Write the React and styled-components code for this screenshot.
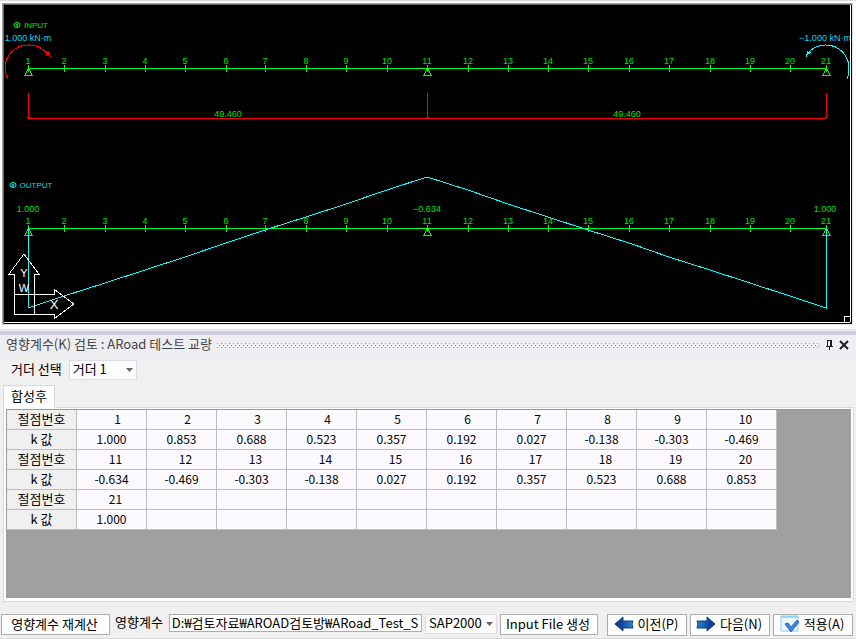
import React from "react";
import styled, { createGlobalStyle } from "styled-components";

const GlobalStyle = createGlobalStyle`
  *, *::before, *::after { box-sizing: border-box; }
  body {
    margin: 0;
    background: #f0f0f0;
    color: #000;
    font: 13px/18px "Noto Sans CJK KR", sans-serif;
  }
  button, input, select { font: inherit; color: inherit; }
`;

const Page = styled.div`
  display: flex;
  flex-direction: column;
  min-height: 100vh;
  border-bottom: 1px solid #d9d9d9;
`;

const ViewerArea = styled.div`
  background: #fff;
  border-top: 1px solid #d9d9d9;
  border-bottom: 1px solid #d9d9d9;
  padding: 2px 3px 4px 2px;
`;

const ViewerFrame = styled.div`
  border: 1px solid;
  border-color: #a0a0a0 #e3e3e3 #e3e3e3 #a0a0a0;
`;

const Drawing = styled.svg`
  display: block;
  width: 100%;
  height: auto;
  background: #000;
  border-top: 1px solid #696969;
  border-left: 1px solid #696969;
  fill: none;
  shape-rendering: crispEdges;
`;

const Label = styled.text`
  fill: ${(p) => p.$color};
  font: ${(p) => p.$size || "9px"} "Liberation Sans", sans-serif;
  text-anchor: middle;
`;

const Dock = styled.section`
  display: flex;
  flex-direction: column;
  flex: 1;
  margin-top: 1px;
  border-top: 4px solid #ccccdc;
`;

const TitleBar = styled.header`
  display: flex;
  align-items: center;
  gap: 5px;
  height: 20px;
  padding: 0 7px 0 6px;
  background: #eeeef2;
`;

const Title = styled.h1`
  margin: 0;
  padding-bottom: 2px;
  font-size: 13px;
  line-height: 18px;
  font-weight: 400;
  color: #444;
  white-space: nowrap;
`;

const Grip = styled.div`
  flex: 1;
  height: 5px;
  background: conic-gradient(from 270deg at 1px 1px, #999 25%, transparent 0) 0 0 / 4px 4px,
    conic-gradient(from 270deg at 1px 1px, #999 25%, transparent 0) 2px 2px / 4px 4px;
`;

const IconButton = styled.button`
  display: flex;
  padding: 0;
  border: 0;
  background: none;
  svg { display: block; }
`;

const SelectorRow = styled.div`
  display: flex;
  align-items: center;
  gap: 7px;
  height: 30px;
  padding-left: 11px;
  label { padding-bottom: 2px; }
`;

const SelectBox = styled.span`
  display: grid;
  align-items: center;
  width: ${(p) => p.$width};
  height: 20px;
  background: #fcfcfd;
  border: 1px solid #dcdce6;
  select, svg { grid-area: 1 / 1; }
  svg { justify-self: end; margin-right: 3px; pointer-events: none; }
  select {
    width: 100%;
    height: 18px;
    padding: 0 0 2px 3px;
    border: 0;
    background: none;
    appearance: none;
    outline: 0;
    line-height: 16px;
  }
`;

const TabList = styled.div`
  display: flex;
  padding-left: 3px;
`;

const Tab = styled.button`
  position: relative;
  width: 52px;
  height: 23px;
  margin-bottom: -1px;
  padding: 0 0 2px;
  border: 1px solid #d9d9d9;
  border-bottom: 0;
  background: #fff;
  line-height: 20px;
`;

const TabPanel = styled.div`
  display: flex;
  flex: 1;
  margin: 0 2px 0 3px;
  padding: 1px 2px 3px;
  background: #fff;
  border: 1px solid #d9d9d9;
`;

const GridArea = styled.div`
  flex: 1;
  background: #a0a0a0;
  border-top: 1px solid #989898;
  border-left: 1px solid #989898;
  overflow: auto;
`;

const Table = styled.table`
  width: 770px;
  table-layout: fixed;
  border-spacing: 0;
  background: #fcfaff;
  th, td {
    height: 20px;
    padding: 0 0 2px;
    border-right: 1px solid #bdbdbd;
    border-bottom: 1px solid #bdbdbd;
    text-align: center;
    font-weight: 400;
    line-height: 17px;
  }
  th { background: #f0f0f0; }
  td { font-size: 12px; }
`;

const NodeCell = styled.td`
  && { padding-left: ${(p) => (p.$single ? "12px" : "8px")}; }
`;

const Footer = styled.footer`
  display: flex;
  align-items: flex-start;
  gap: 3px;
  height: 36px;
  padding: 12px 3px 0 1px;
`;

const Button = styled.button`
  display: flex;
  align-items: center;
  justify-content: center;
  gap: 4px;
  flex: none;
  width: ${(p) => p.$width};
  height: ${(p) => (p.$tall ? "22px" : "21px")};
  padding: 0 2px 2px 0;
  background: #fdfdfd;
  border: 1px solid #adadad;
  line-height: 18px;
  white-space: nowrap;
`;

const PathLabel = styled.label`
  margin: 0 3px 0 2px;
  line-height: 16px;
  white-space: nowrap;
`;

const PathInput = styled.input`
  flex: 1;
  min-width: 0;
  height: 18px;
  padding: 0 2px 2px;
  border: 1px solid #adadad;
  background: #fff;
  outline: 0;
  line-height: 14px;
`;

const Navigation = styled.nav`
  display: flex;
  gap: 3px;
  margin-left: 6px;
`;

const GREEN = "#00ff00";
const CYAN = "#00ffff";
const RED = "#ff0000";
const GREEN_TEXT = "#00e000";
const CYAN_TEXT = "#00dcec";

const nodeX = [28, 64, 105, 145, 185, 226, 265, 306, 346, 387, 427, 468, 508, 548, 588, 629, 669, 710, 750, 790, 826];
const kValues = [
  "1.000", "0.853", "0.688", "0.523", "0.357", "0.192", "0.027", "-0.138", "-0.303", "-0.469", "-0.634",
  "-0.469", "-0.303", "-0.138", "0.027", "0.192", "0.357", "0.523", "0.688", "0.853", "1.000",
];
const supports = [28, 427, 826];

function Beam({ y }) {
  return (
    <g stroke={GREEN}>
      <path d={`M28 ${y}H826`} />
      {nodeX.map((x, i) => (
        <g key={x}>
          <path d={`M${x} ${y - 3}V${y + 4}`} />
          <Label $color={GREEN_TEXT} stroke="none" x={x} y={y - 4}>{i + 1}</Label>
        </g>
      ))}
      {supports.map((x) => (
        <path key={x} d={`M${x} ${y + 1}L${x - 3} ${y + 7}H${x + 4}L${x + 1} ${y + 1}`} />
      ))}
    </g>
  );
}

function Marker({ x, y, color }) {
  return (
    <g stroke={color} shapeRendering="auto">
      <ellipse cx={x} cy={y} rx="3" ry="2.5" />
      <path d={`M${x - 1} ${y}h2M${x} ${y - 1}v3`} />
    </g>
  );
}

function BeamDrawing() {
  const points = nodeX.map((x, i) => `${x},${228 + Math.round(Number(kValues[i]) * 80)}`);
  return (
    <Drawing viewBox="4 5 848 319" role="img" aria-label="영향계수 INPUT / OUTPUT">
      <Marker x={17} y={25} color={GREEN} />
      <Label $color={GREEN_TEXT} $size="8px" x="36" y="28">INPUT</Label>
      <Label $color={CYAN_TEXT} x="28" y="41">1.000 kN·m</Label>
      <Label $color={CYAN_TEXT} x="825" y="41">−1.000 kN·m</Label>
      <path
        stroke={RED}
        d="M8 79A23 23 0 0 1 5 68A23 23 0 0 1 28 45A23 23 0 0 1 48 55M46 52L51 57M46 56L48 51L50 56"
      />
      <path
        stroke={CYAN}
        d="M847 79A23 23 0 0 0 849 68A23 23 0 0 0 826 45A23 23 0 0 0 808 53M806 57L808 51M807 55L811 52"
      />
      <Beam y={68} />
      <g stroke={RED}>
        <path d="M28 118H826" />
        {supports.map((x) => <path key={x} d={`M${x} 93V118M${x - 1} 117h3`} />)}
      </g>
      <Label $color={GREEN_TEXT} x="228" y="117">49.460</Label>
      <Label $color={GREEN_TEXT} x="627" y="117">49.460</Label>

      <Marker x={13} y={185} color={CYAN} />
      <Label $color={CYAN_TEXT} $size="8px" x="36" y="188">OUTPUT</Label>
      <Label $color={GREEN_TEXT} x="28" y="212">1.000</Label>
      <Label $color={GREEN_TEXT} x="427" y="212">−0.634</Label>
      <Label $color={GREEN_TEXT} x="825" y="212">1.000</Label>
      <Beam y={228} />
      <polyline stroke={CYAN} points={`28,228 ${points.join(" ")} 826,228`} />

      <g stroke="#fff">
        <path d="M14 294V274H9L24 254L39 274H34V314" />
        <path d="M14 294H54V289L74 304L54 319V314H14V294" />
      </g>
      <Label $color="#fff" $size="11px" x="24" y="277">Y</Label>
      <Label $color="#fff" $size="11px" x="24" y="292">W</Label>
      <Label $color="#fff" $size="13px" x="54" y="309">X</Label>
      <path stroke="#fff" d="M4 322H850M850 5V322M844 323V316H851" />
    </Drawing>
  );
}

function Caret() {
  return <svg width="7" height="4" viewBox="0 0 7 4"><path fill="#666" d="M0 0H7L3.5 4Z" /></svg>;
}

function ArrowIcon({ next }) {
  return (
    <svg width="20" height="16" viewBox="0 0 20 16" aria-hidden="true">
      <defs>
        <linearGradient id={next ? "nextFill" : "prevFill"} x1={next ? "1" : "0"} x2={next ? "0" : "1"}>
          <stop offset="0.3" stopColor="#123e9c" />
          <stop offset="1" stopColor="#2789cf" />
        </linearGradient>
      </defs>
      <path
        fill={`url(#${next ? "nextFill" : "prevFill"})`}
        stroke="#153d7d"
        d={next ? "M19 8L11 1V5H1L2 8L1 12H11V15Z" : "M1 8L9 1V5H19L18 8L19 12H9V15Z"}
      />
    </svg>
  );
}

function ApplyIcon() {
  return (
    <svg width="20" height="18" viewBox="0 0 20 18" aria-hidden="true">
      <path fill="#edf7fd" stroke="#8dc8ec" d="M1 1H18V16H1Z" />
      <path fill="#9bd3f3" d="M1 1H18V3H1Z" />
      <path fill="#3f84e4" stroke="#2868c8" d="M5 9L8 8L11 12L17 5L19 7L11 17Z" />
    </svg>
  );
}

function KTable() {
  const starts = [0, 10, 20];
  const columns = Array.from({ length: 10 }, (_, i) => i);
  return (
    <Table>
      <tbody>
        {starts.map((start) => (
          <React.Fragment key={start}>
            <tr>
              <th scope="row">절점번호</th>
              {columns.map((c) => (
                <NodeCell key={c} $single={start + c < 9}>
                  {start + c < kValues.length ? start + c + 1 : ""}
                </NodeCell>
              ))}
            </tr>
            <tr>
              <th scope="row">k 값</th>
              {columns.map((c) => <td key={c}>{kValues[start + c] ?? ""}</td>)}
            </tr>
          </React.Fragment>
        ))}
      </tbody>
    </Table>
  );
}

export default function App() {
  return (
    <>
      <GlobalStyle />
      <Page>
        <ViewerArea>
          <ViewerFrame><BeamDrawing /></ViewerFrame>
        </ViewerArea>
        <Dock>
          <TitleBar>
            <Title>영향계수(K) 검토 : ARoad 테스트 교량</Title>
            <Grip />
            <IconButton type="button" aria-label="고정">
              <svg width="9" height="10" viewBox="0 0 9 10" shapeRendering="crispEdges" fill="#1e1e1e">
                <path d="M2 0H7V6H8V7H5V10H4V7H1V6H2ZM3 1V6H5V1Z" fillRule="evenodd" />
              </svg>
            </IconButton>
            <IconButton type="button" aria-label="닫기">
              <svg width="10" height="10" viewBox="0 0 10 10">
                <path d="M1 1L9 9M9 1L1 9" stroke="#1e1e1e" strokeWidth="2" />
              </svg>
            </IconButton>
          </TitleBar>
          <SelectorRow>
            <label htmlFor="girder">거더 선택</label>
            <SelectBox $width="68px">
              <select id="girder" defaultValue="1"><option value="1">거더 1</option></select>
              <Caret />
            </SelectBox>
          </SelectorRow>
          <TabList role="tablist">
            <Tab type="button" role="tab" aria-selected="true">합성후</Tab>
          </TabList>
          <TabPanel role="tabpanel">
            <GridArea><KTable /></GridArea>
          </TabPanel>
          <Footer>
            <Button type="button" $width="109px">영향계수 재계산</Button>
            <PathLabel htmlFor="path">영향계수</PathLabel>
            <PathInput id="path" defaultValue="D:₩검토자료₩AROAD검토방₩ARoad_Test_S" />
            <SelectBox $width="72px">
              <select aria-label="해석 프로그램" defaultValue="SAP2000"><option>SAP2000</option></select>
              <Caret />
            </SelectBox>
            <Button type="button" $width="98px">Input File 생성</Button>
            <Navigation>
              <Button type="button" $width="80px" $tall><ArrowIcon />이전(P)</Button>
              <Button type="button" $width="80px" $tall><ArrowIcon next />다음(N)</Button>
              <Button type="button" $width="80px" $tall><ApplyIcon />적용(A)</Button>
            </Navigation>
          </Footer>
        </Dock>
      </Page>
    </>
  );
}
